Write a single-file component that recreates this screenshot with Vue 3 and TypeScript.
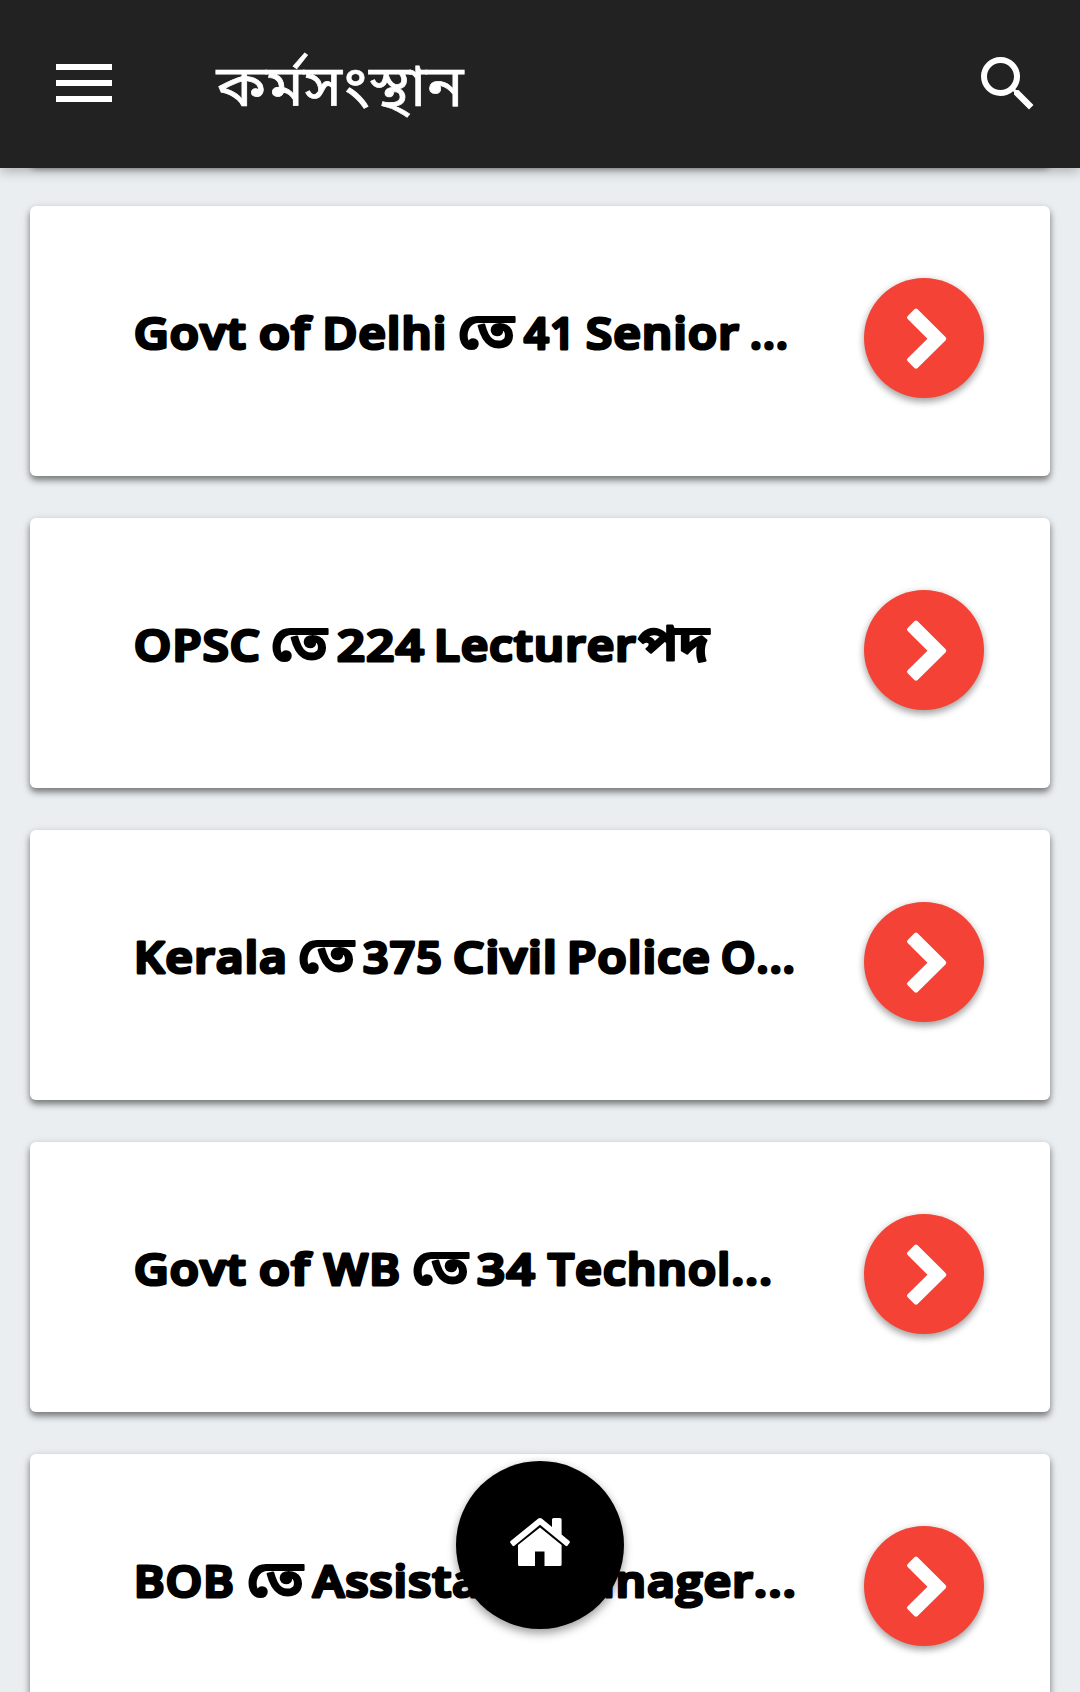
<script setup lang="ts">
interface Word { text: string; x: number; width: number; bengali?: boolean }
interface Job { id: number; words: Word[] }

// Word positions are measured from the left edge of the title area.
const jobs: Job[] = [
  { id: 1, words: [
    { text: 'Govt', x: 2, width: 113 }, { text: 'of', x: 127, width: 52 },
    { text: 'Delhi', x: 190.5, width: 125 }, { text: 'তে', x: 326, width: 56, bengali: true },
    { text: '41', x: 392, width: 52 }, { text: 'Senior', x: 454, width: 154 },
    { text: '...', x: 618, width: 39 },
  ] },
  { id: 2, words: [
    { text: 'OPSC', x: 2, width: 127 }, { text: 'তে', x: 139, width: 56, bengali: true },
    { text: '224', x: 205, width: 88 }, { text: 'Lecturer', x: 302, width: 203 },
    { text: 'পদ', x: 506, width: 71, bengali: true },
  ] },
  { id: 3, words: [
    { text: 'Kerala', x: 2, width: 154 }, { text: 'তে', x: 166, width: 56, bengali: true },
    { text: '375', x: 231, width: 80 }, { text: 'Civil', x: 321, width: 105 },
    { text: 'Police', x: 435, width: 144 }, { text: 'O...', x: 589, width: 75 },
  ] },
  { id: 4, words: [
    { text: 'Govt', x: 2, width: 113 }, { text: 'of', x: 127, width: 52 },
    { text: 'WB', x: 192, width: 77 }, { text: 'তে', x: 280, width: 56, bengali: true },
    { text: '34', x: 345, width: 59 }, { text: 'Technol...', x: 416, width: 225 },
  ] },
  { id: 5, words: [
    { text: 'BOB', x: 2, width: 101 }, { text: 'তে', x: 115, width: 56, bengali: true },
    { text: 'Assistant', x: 181, width: 219 }, { text: 'Manager...', x: 410, width: 255 },
  ] },
]
</script>

<template>
  <div class="screen">
    <header class="bar">
      <svg class="menu" viewBox="0 0 56 38" aria-label="Menu">
        <path d="M0 0h56v6H0zM0 16h56v6H0zM0 32h56v6H0z" fill="#fff" />
      </svg>
      <svg class="heading" viewBox="0 0 260 84">
        <text x="0.5" y="63.5" textLength="247" lengthAdjust="spacingAndGlyphs">কর্মসংস্থান</text>
      </svg>
      <svg class="search" viewBox="0 0 24 24" aria-label="Search">
        <path fill="#fff" d="M15.5 14h-.79l-.28-.27A6.471 6.471 0 0 0 16 9.5 6.5 6.5 0 1 0 9.5 16c1.61 0 3.09-.59 4.23-1.57l.27.28v.79l5 4.99L20.49 19l-4.99-5zm-6 0C7.01 14 5 11.99 5 9.5S7.01 5 9.5 5 14 7.01 14 9.5 11.99 14 9.5 14z" />
      </svg>
    </header>

    <main class="list">
      <article class="card card-passed" />
      <article v-for="job in jobs" :key="job.id" class="card">
        <svg class="title" viewBox="0 0 690 90">
          <text
            v-for="word in job.words"
            :key="word.x"
            :class="{ bengali: word.bengali }"
            :x="word.x"
            y="60"
            :textLength="word.width"
            lengthAdjust="spacingAndGlyphs"
          >{{ word.text }}</text>
        </svg>
        <button class="go" aria-label="Open">
          <svg viewBox="0 0 120 120">
            <path d="M50.4 31.2Q52 29.6 53.6 31.2L81.5 58.9Q83.2 60.8 81.5 62.6L53.6 90Q52 91.6 50.4 90L43.7 83.3Q42.2 81.8 43.7 80.2L63.5 60.8L43.7 41Q42.2 39.5 43.7 38z" fill="#fff" />
          </svg>
        </button>
      </article>
    </main>

    <button class="home" aria-label="Home">
      <svg viewBox="0 0 60 48">
        <path d="M28 .8Q30 -.8 32 .8L42 9V1.6Q42 0 43.6 0H50Q51.6 0 51.6 1.6V16.5L59.4 23Q60.4 24 59.5 25L57.6 27.6Q56.7 28.6 55.6 27.7L30 6.8L4.4 27.7Q3.3 28.6 2.4 27.6L.5 25Q-.4 24 .6 23z" />
        <path d="M30 9.5L51.6 27V46.4Q51.6 48 50 48H34.5V33.6H25V48H9.6Q8 48 8 46.4V27z" />
      </svg>
    </button>
  </div>
</template>

<style>
html, body { margin: 0; overflow: hidden; }
</style>

<style scoped>
.screen {
  position: relative;
  display: flex;
  flex-direction: column;
  width: 1080px;
  height: 1692px;
  overflow: hidden;
  background: #eaeef1;
  font-family: "Open Sans", "Noto Sans", sans-serif;
}
.bar {
  z-index: 2;
  display: flex;
  flex: none;
  align-items: center;
  box-sizing: border-box;
  height: 168px;
  padding: 0 36px 0 56px;
  background: #222;
  box-shadow: 0 3px 12px rgba(0, 0, 0, .28);
}
.menu { width: 56px; height: 38px; margin-top: -2px; }
.heading {
  width: 260px;
  height: 84px;
  margin-left: 104px;
  overflow: visible;
  fill: #fff;
  stroke: #fff;
  stroke-width: .7px;
  font-family: "Noto Sans Bengali", "Noto Sans", sans-serif;
  font-size: 57px;
}
.search { width: 72px; height: 72px; margin-left: auto; }
.list {
  display: flex;
  flex-direction: column;
  gap: 42px;
  padding: 0 30px;
}
.card {
  display: flex;
  flex: none;
  align-items: flex-start;
  justify-content: space-between;
  box-sizing: border-box;
  height: 270px;
  padding: 72px 66px 0 102px;
  border-radius: 6px;
  background: #fff;
  box-shadow: 0 4px 6px rgba(0, 0, 0, .45), 0 3px 12px rgba(0, 0, 0, .1);
}
.card-passed { margin-top: -274px; }
.title {
  width: 690px;
  height: 90px;
  margin-top: 11px;
  overflow: visible;
  fill: #000;
  stroke: #000;
  stroke-width: 3.2px;
  stroke-linejoin: round;
  font-size: 43.5px;
  font-weight: 650;
  letter-spacing: 1.2px;
}
.bengali {
  font-family: "Noto Sans Bengali", "Noto Sans", sans-serif;
  font-size: 50px;
  font-weight: 600;
  letter-spacing: 0;
  stroke-width: 2.2px;
}
button { padding: 0; border: 0; border-radius: 50%; }
.go {
  flex: none;
  width: 120px;
  height: 120px;
  background: #f44336;
  box-shadow: 0 4px 7px rgba(0, 0, 0, .3), 0 1px 8px rgba(0, 0, 0, .12);
}
.go svg { display: block; }
.home {
  position: absolute;
  z-index: 3;
  bottom: 63px;
  left: 456px;
  display: flex;
  align-items: center;
  justify-content: center;
  width: 168px;
  height: 168px;
  background: #000;
  box-shadow: 0 5px 10px rgba(0, 0, 0, .3), 0 1px 8px rgba(0, 0, 0, .12);
}
.home svg { width: 60px; height: 48px; margin-top: -6px; fill: #fff; }
</style>
